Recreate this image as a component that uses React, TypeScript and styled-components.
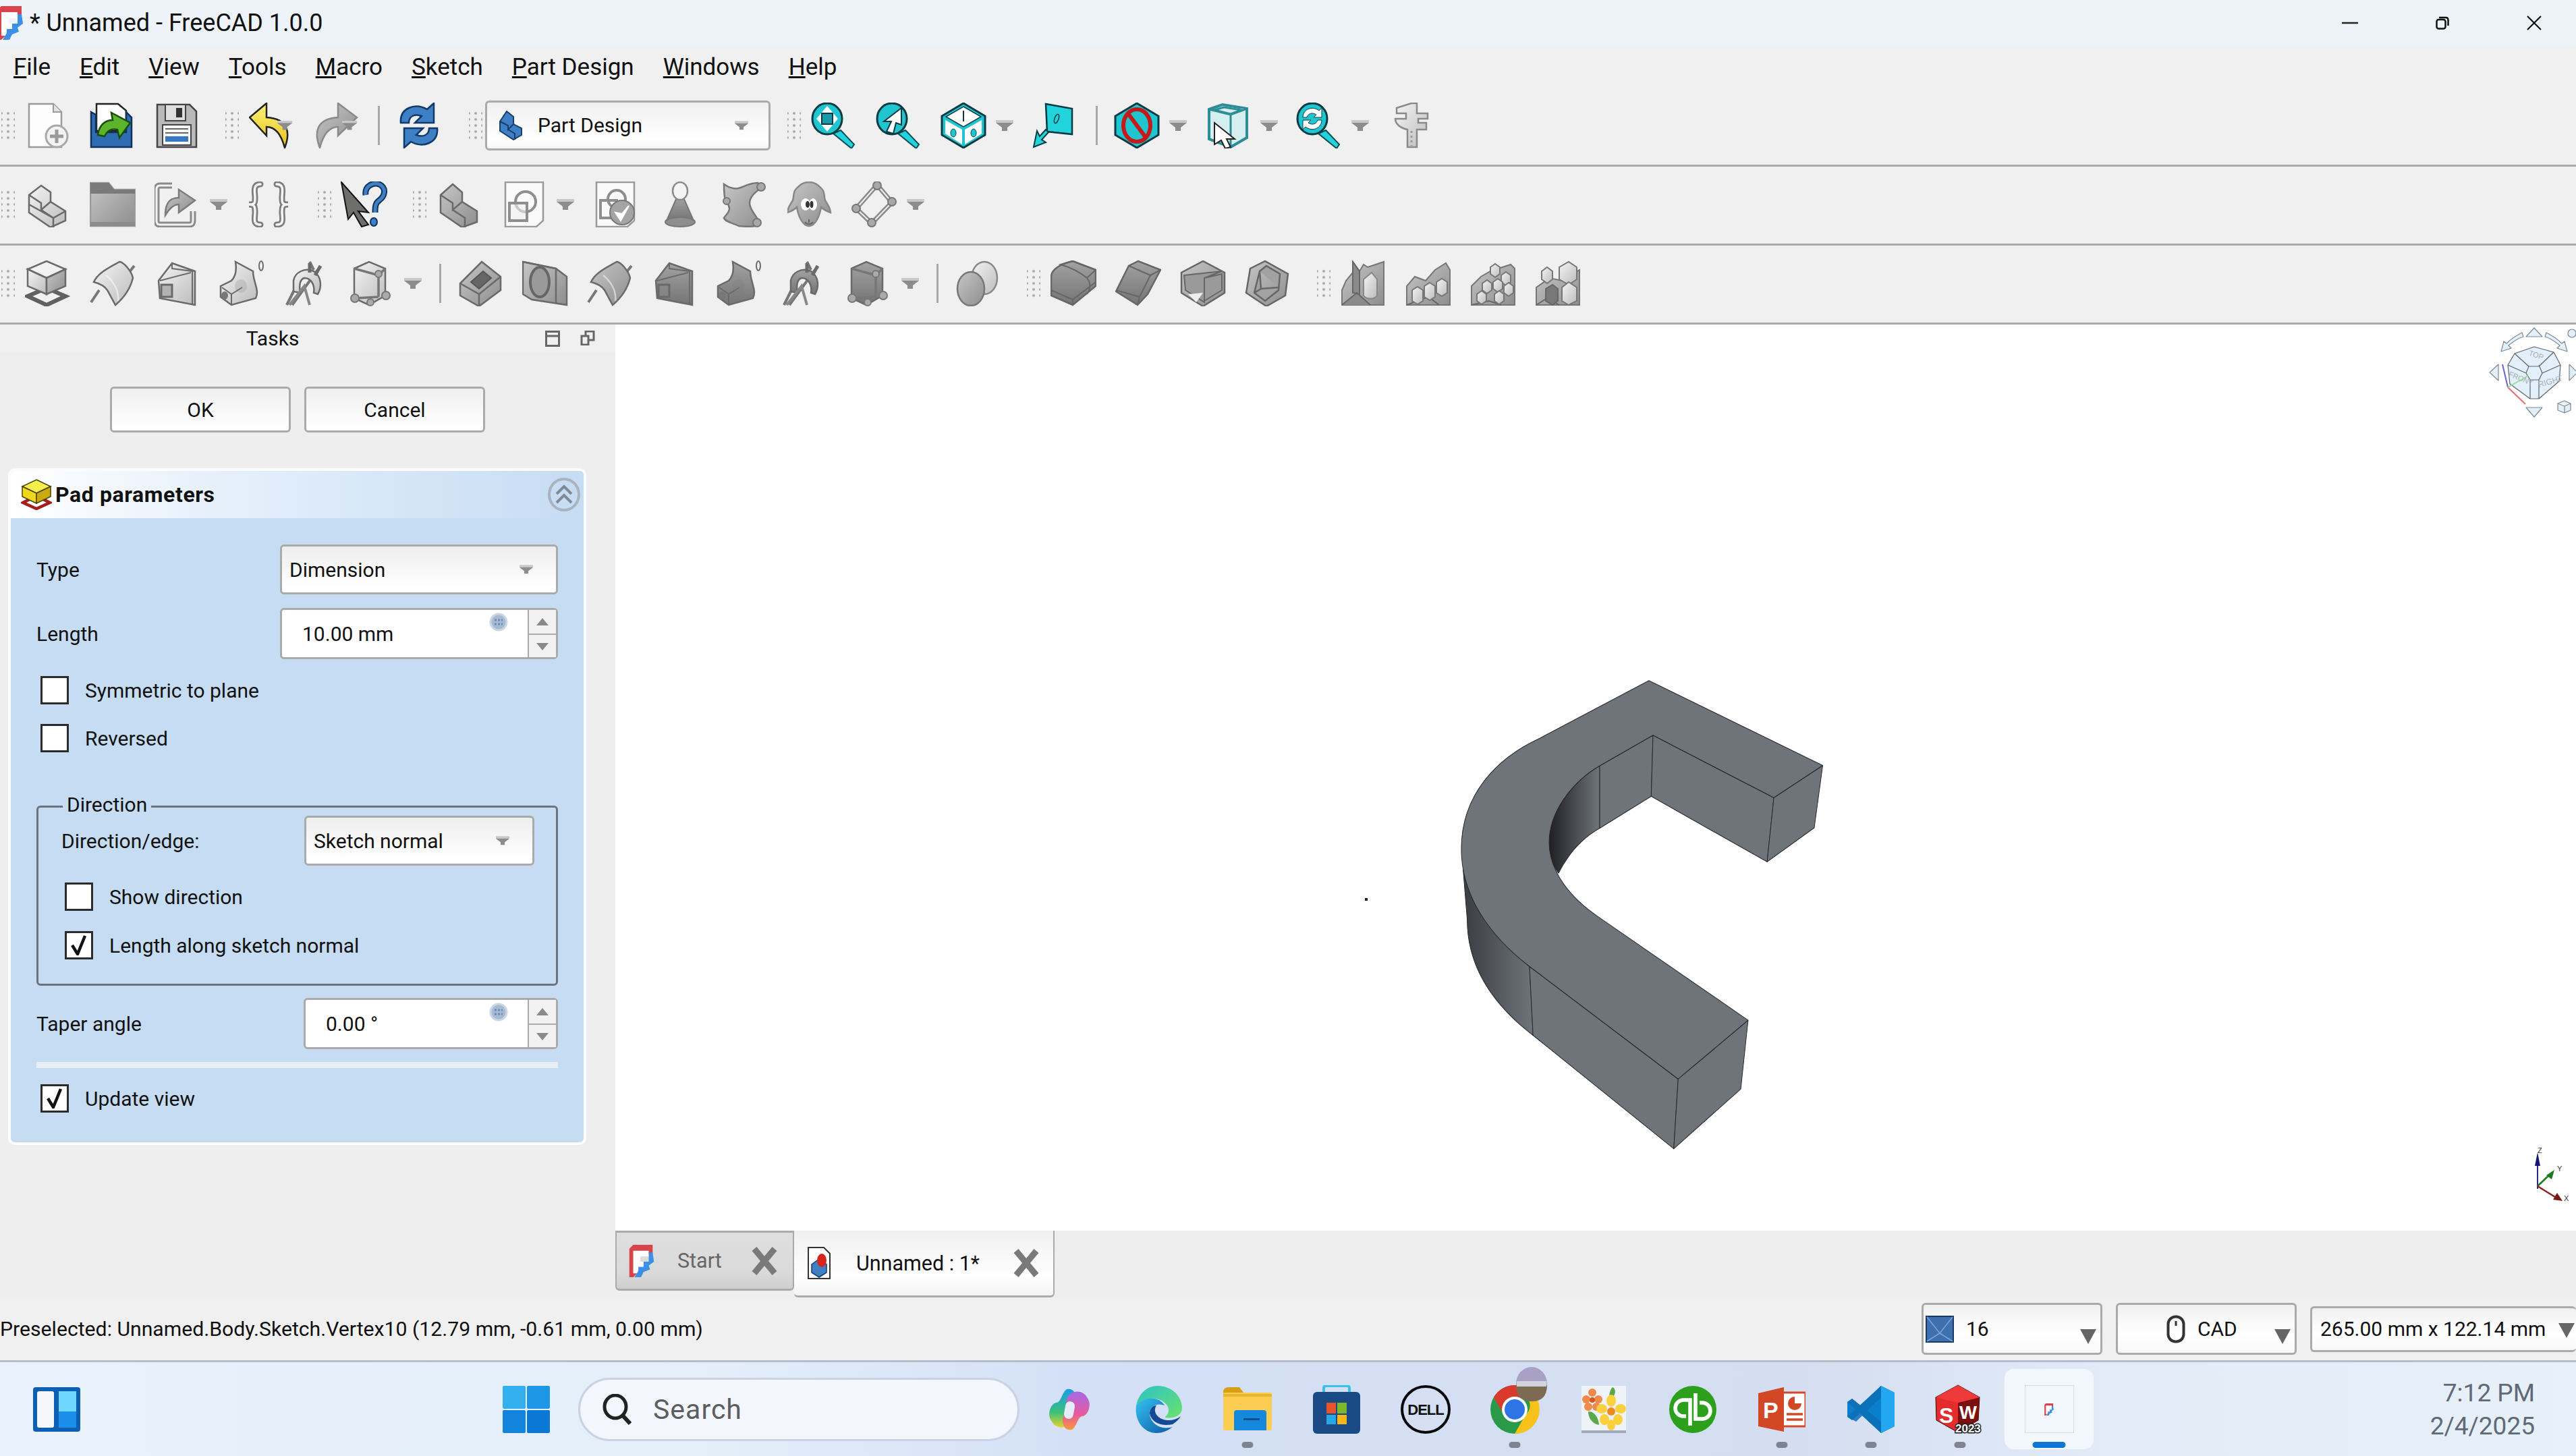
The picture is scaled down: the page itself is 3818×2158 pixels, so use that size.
import React from 'react';
import styled, { createGlobalStyle } from 'styled-components';

const GlobalStyle = createGlobalStyle`
  html, body {
    margin: 0;
    padding: 0;
    width: 3818px;
    height: 2158px;
    overflow: hidden;
    background: #eeeeee;
    font-family: Roboto, "Noto Sans", sans-serif;
    color: #111;
  }
  * { box-sizing: border-box; }
`;

const Screen = styled.div`
  width: 3818px;
  height: 2158px;
  display: flex;
  flex-direction: column;
  overflow: hidden;
`;

const TitleBar = styled.div`
  height: 68px;
  flex: none;
  display: flex;
  align-items: center;
  background: #eef3f9;
  font-size: 36px;
`;

const TitleText = styled.span`
  margin-left: 10px;
`;

const WindowControls = styled.div`
  margin-left: auto;
  display: flex;
  align-items: center;
  padding-right: 51px;
  gap: 115px;
`;

const MenuBar = styled.div`
  height: 62px;
  flex: none;
  display: flex;
  align-items: center;
  gap: 43px;
  padding-left: 20px;
  font-size: 35px;
  background: #f0f0f0;
`;

const Toolbar = styled.div`
  height: 117px;
  flex: none;
  display: flex;
  align-items: center;
  padding-bottom: 3px;
  background: #f0f0f0;
  border-bottom: 3px solid #aaaaaa;
`;

const Grip = styled.div<{ $ml: number }>`
  width: 22px;
  height: 48px;
  flex: none;
  margin-left: ${(p) => p.$ml}px;
  background-image: radial-gradient(circle, #a8a8a8 1.6px, transparent 2.2px);
  background-size: 10px 9px;
  background-position: center;
  background-repeat: repeat;
  clip-path: inset(0 1px);
`;

const Tool = styled.div`
  width: 96px;
  height: 68px;
  flex: none;
  display: flex;
  align-items: center;
  justify-content: center;
`;

const MenuArrow = styled.div`
  width: 26px;
  margin-right: 13px;
  flex: none;
  display: flex;
  justify-content: center;
`;

const Sep = styled.div`
  width: 3px;
  height: 58px;
  flex: none;
  margin: 0 10px 0 13px;
  background: #a8a8a8;
`;

const WorkbenchCombo = styled.div`
  width: 423px;
  height: 74px;
  flex: none;
  margin-left: 3px;
  padding: 0 30px 0 17px;
  display: flex;
  align-items: center;
  gap: 22px;
  font-size: 30px;
  border: 3px solid #aaaaaa;
  border-radius: 6px;
  background: linear-gradient(#f0f0f0, #ffffff 80%, #f6f6f6);
`;

const ComboDrop = styled.span`
  margin-left: auto;
  display: flex;
`;

const Main = styled.div`
  flex: 1;
  min-height: 0;
  display: flex;
`;

const TaskPanel = styled.div`
  width: 912px;
  flex: none;
  background: #eeeeee;
  display: flex;
  flex-direction: column;
  font-size: 30px;
`;

const DockHeader = styled.div`
  height: 41px;
  flex: none;
  display: grid;
  grid-template-columns: 808px 1fr;
  align-items: center;
  background: #f0f0f0;
`;

const DockTitle = styled.div`
  text-align: center;
`;

const DockIcons = styled.div`
  display: flex;
  gap: 30px;
`;

const ButtonRow = styled.div`
  display: flex;
  gap: 20px;
  margin: 51px 0 0 163px;
`;

const PushButton = styled.div`
  width: 268px;
  height: 68px;
  display: flex;
  align-items: center;
  justify-content: center;
  border: 3px solid #aaaaaa;
  border-radius: 6px;
  background: linear-gradient(#f0f0f0, #ffffff);
`;

const TaskBox = styled.div`
  width: 857px;
  height: 1003px;
  margin: 53px 0 0 12px;
  border: 4px solid #fbfcfd;
  border-radius: 10px;
  background: #c6dcf3;
  display: flex;
  flex-direction: column;
`;

const TaskBoxHeader = styled.div`
  height: 70px;
  flex: none;
  display: flex;
  align-items: center;
  padding: 0 4px 0 15px;
  gap: 5px;
  background: linear-gradient(90deg, #ffffff, #e6f0fb 35%, #c6dcf3);
  border-radius: 6px 6px 0 0;
  font-weight: 700;
  font-size: 32px;
  letter-spacing: 0.6px;
`;

const CollapseButton = styled.div`
  margin-left: auto;
  display: flex;
`;

const TaskBody = styled.div`
  flex: 1;
  padding: 39px 38px 0;
  display: flex;
  flex-direction: column;
`;

const FormRow = styled.div<{ $top?: number; $h?: number }>`
  display: flex;
  align-items: center;
  justify-content: space-between;
  flex: none;
  height: ${(p) => p.$h ?? 76}px;
  margin-top: ${(p) => p.$top ?? 0}px;
`;

const Combo = styled.div<{ $w: number; $h?: number }>`
  width: ${(p) => p.$w}px;
  height: ${(p) => p.$h ?? 74}px;
  padding: 0 34px 0 11px;
  display: flex;
  align-items: center;
  justify-content: space-between;
  border: 3px solid #aaaaaa;
  border-radius: 6px;
  background: linear-gradient(#eeeeee, #ffffff 90%);
`;

const Spin = styled.div<{ $w: number }>`
  width: ${(p) => p.$w}px;
  height: 76px;
  display: flex;
  border: 3px solid #aaaaaa;
  border-radius: 6px;
  background: #ffffff;
`;

const SpinValue = styled.div<{ $pad: number }>`
  flex: 1;
  padding-left: ${(p) => p.$pad}px;
  position: relative;
  display: flex;
  align-items: center;
`;

const ExprBadge = styled.div`
  position: absolute;
  right: 29px;
  top: 3px;
  display: flex;
`;

const SpinButtons = styled.div`
  width: 42px;
  flex: none;
  display: grid;
  grid-template-rows: 1fr 1fr;
  border-left: 2px solid #aaaaaa;
  background: #f2f2f2;
`;

const SpinButton = styled.div<{ $down?: boolean }>`
  display: flex;
  align-items: center;
  justify-content: center;
  border-top: ${(p) => (p.$down ? '2px solid #aaaaaa' : 'none')};
`;

const CheckRow = styled.label<{ $top: number; $left?: number }>`
  display: flex;
  align-items: center;
  gap: 24px;
  height: 42px;
  flex: none;
  margin-top: ${(p) => p.$top}px;
  margin-left: ${(p) => p.$left ?? 6}px;
`;

const CheckBox = styled.span`
  width: 42px;
  height: 42px;
  flex: none;
  display: flex;
  align-items: center;
  justify-content: center;
  border: 3px solid #2b2b2b;
  background: #ffffff;
`;

const GroupBox = styled.div`
  position: relative;
  flex: none;
  height: 267px;
  margin-top: 79px;
  padding: 12px 32px 0 0;
  border: 3px solid #6b747e;
  border-radius: 6px;
  display: flex;
  flex-direction: column;
`;

const GroupLegend = styled.span`
  position: absolute;
  top: -24px;
  left: 36px;
  padding: 0 6px;
  background: #c6dcf3;
  line-height: 40px;
`;

const GroupLabel = styled.span`
  margin-left: 34px;
`;

const Rule = styled.div`
  height: 9px;
  flex: none;
  margin-top: 19px;
  background: #e9eef2;
`;

const RightColumn = styled.div`
  flex: 1;
  min-width: 0;
  display: flex;
  flex-direction: column;
`;

const Viewport = styled.div`
  flex: 1;
  min-height: 0;
  position: relative;
  overflow: hidden;
  background: #ffffff;
`;

const ModelLayer = styled.svg`
  position: absolute;
  left: 1188px;
  top: 469px;
  width: 680px;
  height: 780px;
`;

const VertexDot = styled.div`
  position: absolute;
  left: 1111px;
  top: 850px;
  width: 4px;
  height: 4px;
  background: #222;
`;

const NavCube = styled.svg`
  position: absolute;
  left: 2768px;
  top: -1px;
  width: 140px;
  height: 140px;
  overflow: visible;
`;

const Triad = styled.svg`
  position: absolute;
  left: 2828px;
  top: 1219px;
  width: 78px;
  height: 90px;
`;

const TabBar = styled.div`
  height: 99px;
  flex: none;
  display: flex;
  align-items: flex-start;
  background: #eeeeee;
`;

const Tab = styled.div<{ $active?: boolean }>`
  width: ${(p) => (p.$active ? 386 : 265)}px;
  height: ${(p) => (p.$active ? 99 : 89)}px;
  flex: none;
  display: flex;
  align-items: center;
  padding: ${(p) => (p.$active ? '0 20px 0 20px' : '0 22px 0 18px')};
  gap: ${(p) => (p.$active ? 38 : 34)}px;
  font-size: 30.5px;
  color: ${(p) => (p.$active ? '#111' : '#666')};
  border-style: solid;
  border-width: ${(p) => (p.$active ? '0 2px 3px 0' : '3px 2px 3px 2px')};
  border-color: #aaaaaa;
  border-radius: 0 0 6px 6px;
  background: ${(p) =>
    p.$active ? 'linear-gradient(#f0f0f0, #ffffff 70%, #f4f4f4)' : 'linear-gradient(#dedede, #dadada 70%, #cfcfcf)'};
`;

const TabClose = styled.span`
  margin-left: auto;
  display: flex;
`;

const StatusBar = styled.div`
  height: 93px;
  flex: none;
  display: flex;
  align-items: center;
  background: #f0f0f0;
  font-size: 30px;
`;

const StatusText = styled.span`
  font-size: 30.2px;
  white-space: nowrap;
`;

const StatusCombos = styled.div`
  margin-left: auto;
  display: flex;
  align-items: center;
  gap: 20px;
`;

const StatusCombo = styled.div<{ $w: number; $h: number; $pad: number }>`
  width: ${(p) => p.$w}px;
  height: ${(p) => p.$h}px;
  padding-left: ${(p) => p.$pad}px;
  display: flex;
  align-items: center;
  gap: 18px;
  position: relative;
  border: 3px solid #aaaaaa;
  border-right-width: ${(p) => (p.$w > 300 ? 0 : 3)}px;
  border-radius: 6px;
  background: linear-gradient(#f0f0f0, #ffffff 60%, #f8f8f8);
  white-space: nowrap;
`;

const StatusArrow = styled.span<{ $top?: number; $right?: number }>`
  position: absolute;
  right: ${(p) => p.$right ?? 6}px;
  top: ${(p) => p.$top ?? 36}px;
  width: 0;
  height: 0;
  border-left: 12px solid transparent;
  border-right: 12px solid transparent;
  border-top: 22px solid #666;
`;

const Taskbar = styled.div`
  height: 142px;
  flex: none;
  display: flex;
  align-items: center;
  border-top: 3px solid #b5bccb;
  background: linear-gradient(90deg, #eaf2fb 0%, #e3eef9 28%, #d4e0f6 42%, #d4def0 70%, #e2ebf7 82%, #e8f0f9 100%);
`;

const WidgetButton = styled.div`
  margin-left: 49px;
  display: flex;
`;

const StartButton = styled.div`
  margin-left: 626px;
  display: flex;
`;

const SearchBox = styled.div`
  width: 654px;
  height: 94px;
  margin-left: 42px;
  padding-left: 32px;
  display: flex;
  align-items: center;
  gap: 32px;
  border: 3px solid #c9d3e4;
  border-radius: 47px;
  background: #f3f7fd;
  font-size: 41px;
  color: #5d5d5d;
  letter-spacing: 1px;
`;

const TaskSlots = styled.div`
  margin-left: 8px;
  display: flex;
`;

const TaskSlot = styled.div<{ $current?: boolean }>`
  position: relative;
  width: 132px;
  height: 119px;
  display: flex;
  align-items: center;
  justify-content: center;
  border-radius: 14px;
  background: ${(p) => (p.$current ? '#f2f6fd' : 'transparent')};
  box-shadow: ${(p) => (p.$current ? '0 0 0 1px #e4eaf4' : 'none')};
`;

const CurrentFrame = styled.div`
  width: 73px;
  height: 71px;
  display: flex;
  align-items: center;
  justify-content: center;
  border: 1px solid #d8dee8;
`;

const RunDot = styled.span<{ $current?: boolean }>`
  position: absolute;
  bottom: 2px;
  left: 50%;
  transform: translateX(-50%);
  width: ${(p) => (p.$current ? 49 : 17)}px;
  height: 9px;
  border-radius: 5px;
  background: ${(p) => (p.$current ? '#0c77d6' : '#7e8491')};
`;

const Clock = styled.div`
  margin-left: auto;
  padding-right: 61px;
  text-align: right;
  font-size: 37px;
  line-height: 49px;
  color: #5e6a78;
`;

const C = { s: '#6a6a6a', w: 2.5 };

const GrayDefs = () => (
  <svg width="0" height="0" aria-hidden="true" style={{ position: 'absolute' }}>
    <defs>
      <linearGradient id="gl" x1="0" y1="0" x2="1" y2="1">
        <stop offset="0" stopColor="#f4f4f4" />
        <stop offset="1" stopColor="#bcbcbc" />
      </linearGradient>
      <linearGradient id="gm" x1="0" y1="0" x2="1" y2="1">
        <stop offset="0" stopColor="#c6c6c6" />
        <stop offset="1" stopColor="#8e8e8e" />
      </linearGradient>
      <linearGradient id="gd" x1="0" y1="0" x2="0" y2="1">
        <stop offset="0" stopColor="#a2a2a2" />
        <stop offset="1" stopColor="#747474" />
      </linearGradient>
      <linearGradient id="yel" x1="0" y1="0" x2="0" y2="1">
        <stop offset="0" stopColor="#fff27a" />
        <stop offset="1" stopColor="#e6c21c" />
      </linearGradient>
      <linearGradient id="edgeA" x1="0" y1="0" x2="1" y2="1">
        <stop offset="0" stopColor="#35c1f1" />
        <stop offset="1" stopColor="#0c59a4" />
      </linearGradient>
      <linearGradient id="edgeB" x1="0" y1="0" x2="1" y2="1">
        <stop offset="0" stopColor="#2cc3c9" />
        <stop offset="1" stopColor="#6be16a" />
      </linearGradient>
      <linearGradient id="curveIn" x1="0" y1="0" x2="1" y2="0">
        <stop offset="0" stopColor="#1f2023" />
        <stop offset="1" stopColor="#6f747b" />
      </linearGradient>
      <linearGradient id="curveOut" x1="0" y1="0" x2="1" y2="0">
        <stop offset="0" stopColor="#3a3d42" />
        <stop offset="1" stopColor="#6f747b" />
      </linearGradient>
      <linearGradient id="copA" x1="0" y1="0" x2="0" y2="1">
        <stop offset="0" stopColor="#1b9de8" />
        <stop offset="0.6" stopColor="#38c07c" />
        <stop offset="1" stopColor="#e8d22e" />
      </linearGradient>
      <linearGradient id="copB" x1="0" y1="0" x2="0" y2="1">
        <stop offset="0" stopColor="#a56ae8" />
        <stop offset="0.6" stopColor="#e85a9c" />
        <stop offset="1" stopColor="#f59a3c" />
      </linearGradient>
    </defs>
  </svg>
);

const Ic: React.FC<{ w?: number; h?: number; children: React.ReactNode }> = ({ w = 68, h = 68, children }) => (
  <svg width={w} height={h} viewBox={`0 0 ${w} ${h}`} style={{ display: 'block' }}>
    {children}
  </svg>
);

const Funnel = ({ x = 0, y = 0 }: { x?: number; y?: number }) => (
  <g transform={`translate(${x} ${y})`}>
    <path d="M0 0H26V4L17 11V16H9V11L0 4Z" fill="#8c8c8c" />
    <path d="M0 0H26V4H0Z" fill="#c8c8c8" />
  </g>
);

const Drop = () => (
  <svg width="26" height="16" viewBox="0 0 26 16" style={{ display: 'block' }}>
    <Funnel />
  </svg>
);

const SmallDrop = () => (
  <svg width="20" height="14" viewBox="0 0 26 16" style={{ display: 'block', flex: 'none' }}>
    <Funnel />
  </svg>
);

const FreeCadLogo = ({ w = 38, h = 50 }: { w?: number; h?: number }) => (
  <svg width={w} height={h} viewBox="0 0 38 50" style={{ display: 'block', flex: 'none' }}>
    <path d="M0 6 6 0H36V14H14V42L6 50H0Z" fill="#d9434a" />
    <path d="M6 9H30V18H17V26H22V34H14V44H6Z" fill="#ffffff" />
    <path d="M30 12H36L38 26 30 32 32 38 22 42 18 50H8L14 40V34H22V26H30Z" fill="#3c8fe6" />
  </svg>
);

const Mag: React.FC<{ children: React.ReactNode }> = ({ children }) => (
  <Ic>
    <path d="M33 46 44 41 64 62 60 68Z" fill="#22d3dc" stroke="#0a4b55" strokeWidth="2" />
    <ellipse cx="24" cy="24" rx="22" ry="23" fill="#1fc6cf" stroke="#0a3b44" strokeWidth="3" />
    {children}
  </Ic>
);

const Hex = ({ children }: { children?: React.ReactNode }) => (
  <Ic>
    <path d="M34 1 66 20V48L34 67 2 48V20Z" fill="#1fc6cf" stroke="#0a3b44" strokeWidth="3" />
    {children}
  </Ic>
);

const icons: Record<string, React.ReactNode> = {
  newDoc: (
    <Ic>
      <path d="M6 2H42L54 14V66H6Z" fill="#fdfdfd" stroke="#9a9a9a" strokeWidth="2.5" />
      <path d="M42 2V14H54" fill="#e2e2e2" stroke="#9a9a9a" strokeWidth="2" />
      <circle cx="47" cy="50" r="16" fill="#f2f2f2" stroke="#a8a8a8" strokeWidth="3" />
      <path d="M47 40V60M37 50H57" stroke="#9a9a9a" strokeWidth="5" />
    </Ic>
  ),
  open: (
    <Ic>
      <path d="M10 2H42L54 12V42H10Z" fill="#fff" stroke="#222" strokeWidth="2.5" />
      <path d="M2 14 9 18V44H54V14L62 22V66H2Z" fill="#2f6db3" stroke="#12325c" strokeWidth="2.5" />
      <path d="M12 48C14 32 24 26 34 26L32 15 60 30 44 52 41 40C31 38 26 42 22 50Z" fill="#5ab52a" stroke="#1d4d0e" strokeWidth="2.5" />
    </Ic>
  ),
  save: (
    <Ic>
      <path d="M4 3H52L62 13V66H4Z" fill="#b9b9b9" stroke="#444" strokeWidth="2.5" />
      <rect x="16" y="3" width="30" height="24" fill="#dedede" stroke="#444" strokeWidth="2" />
      <rect x="32" y="8" width="9" height="14" fill="#333" />
      <rect x="12" y="33" width="42" height="30" fill="#f6f6f6" stroke="#444" strokeWidth="2" />
      <path d="M16 39H50M16 45H50" stroke="#666" strokeWidth="2" />
      <rect x="16" y="50" width="34" height="8" fill="#3a77c2" />
    </Ic>
  ),
  undo: (
    <Ic>
      <path d="M26 1 1 22 26 49V36C40 36 48 48 53 67 62 44 58 24 26 22Z" fill="url(#yel)" stroke="#222" strokeWidth="2.5" />
      <g transform="translate(42 27) scale(.85)"><Funnel /></g>
    </Ic>
  ),
  redo: (
    <Ic>
      <path d="M36 1 64 22 36 49V36C22 36 14 48 9 67 0 44 4 24 36 22Z" fill="url(#gm)" stroke="#8a8a8a" strokeWidth="2.5" />
      <g transform="translate(42 27) scale(.85)"><Funnel /></g>
    </Ic>
  ),
  refresh: (
    <Ic w={60}>
      <path d="M3 30C1 8 24 0 42 10L52 1V30H24L34 20C24 16 15 20 15 30Z" fill="#3f7fc4" stroke="#103a6b" strokeWidth="2.5" />
      <path d="M57 38C59 60 36 68 18 58L8 67V38H36L26 48C36 52 45 48 45 38Z" fill="#3f7fc4" stroke="#103a6b" strokeWidth="2.5" />
    </Ic>
  ),
  zoomAll: (
    <Mag>
      <path d="M24 5 40 24 24 43 8 24Z" fill="#fff" />
      <rect x="16" y="16" width="16" height="16" fill="#1a9aa8" stroke="#0a3b44" strokeWidth="2" />
    </Mag>
  ),
  zoomSel: (
    <Mag>
      <path d="M38 8 12 28H23L16 43 26 46 30 30 38 33Z" fill="#fff" stroke="#0a3b44" strokeWidth="2" />
    </Mag>
  ),
  views: (
    <Hex>
      <path d="M34 6 60 21 34 36 8 21Z" fill="#fff" stroke="#0a3b44" strokeWidth="1.5" />
      <path d="M7 26 32 40V62L7 46Z" fill="#fff" />
      <path d="M61 26 36 40V62L61 46Z" fill="#fff" />
      <path d="M34 12V28" stroke="#0a3b44" strokeWidth="2" />
      <ellipse cx="19" cy="45" rx="4" ry="6" fill="#1fc6cf" stroke="#0a3b44" />
      <ellipse cx="49" cy="45" rx="4" ry="6" fill="#1fc6cf" stroke="#0a3b44" />
    </Hex>
  ),
  bbox: (
    <Ic>
      <path d="M21 2 60 9V47L23 43Z" fill="#22d3dc" stroke="#083a44" strokeWidth="2.5" />
      <ellipse cx="37" cy="24" rx="3" ry="7" fill="#22d3dc" stroke="#083a44" strokeWidth="1.5" transform="rotate(20 37 24)" />
      <path d="M3 66 8 42 12 50 21 40 25 44 15 55 21 59Z" fill="#22d3dc" stroke="#083a44" strokeWidth="2" />
    </Ic>
  ),
  noDraw: (
    <Hex>
      <ellipse cx="34" cy="34" rx="20" ry="24" fill="none" stroke="#c41a1a" strokeWidth="6" />
      <path d="M20 15 48 53" stroke="#c41a1a" strokeWidth="6" />
    </Hex>
  ),
  cubeCursor: (
    <Ic>
      <path d="M6 10 26 3 62 9V52L38 66 6 54Z" fill="#bfeef0" fillOpacity=".55" stroke="#2d8d96" strokeWidth="4" />
      <path d="M14 11 28 7 54 11 38 17ZM6 10 38 18 62 9M38 18V66" fill="#f2fbfb" stroke="#2d8d96" strokeWidth="3" />
      <path d="M14 30 44 54H32L38 66 30 68 24 56 14 62Z" fill="#fff" stroke="#222" strokeWidth="2" />
    </Ic>
  ),
  zoomRefresh: (
    <Mag>
      <path d="M10 22C10 10 24 4 34 12L38 8V22H26L30 18C24 14 18 16 16 22Z" fill="#fff" stroke="#0a3b44" />
      <path d="M38 26C38 38 24 44 14 36L10 40V26H22L18 30C24 34 30 32 32 26Z" fill="#fff" stroke="#0a3b44" />
    </Mag>
  ),
  measure: (
    <Ic>
      <path d="M14 8 36 1H44V16H60V24H46V30H58V40H44V66H30V40C20 38 12 32 12 24H28V16H14Z" fill="url(#gl)" stroke="#8a8a8a" strokeWidth="2.5" />
      <path d="M36 42V64" stroke="#999" strokeWidth="3" strokeDasharray="3 4" />
    </Ic>
  ),
  lBlockLight: (
    <Ic>
      <path d="M6 20 24 6 38 16V30L60 44V58L38 68 6 46Z" fill="url(#gl)" stroke={C.s} strokeWidth={C.w} />
      <path d="M6 20 24 32V42L38 30M24 42 42 54V68M6 34 42 54 60 44" fill="none" stroke={C.s} strokeWidth={C.w} />
    </Ic>
  ),
  lBlockDark: (
    <Ic>
      <path d="M6 20 24 4 38 16V30L60 44V60L38 68 6 46Z" fill="url(#gm)" stroke={C.s} strokeWidth={C.w} />
      <path d="M6 20 24 32V42L38 30M24 42 42 54V68" fill="none" stroke={C.s} strokeWidth={C.w} />
    </Ic>
  ),
  folder: (
    <Ic>
      <path d="M1 2H28L36 12H67V66H1Z" fill="url(#gm)" stroke="#9a9a9a" strokeWidth="2.5" />
      <path d="M1 2H28L36 12H67V18H1Z" fill="#7a7a7a" />
      <rect x="1" y="60" width="66" height="6" fill="#8c8c8c" />
    </Ic>
  ),
  exportDoc: (
    <Ic>
      <path d="M26 6H8Q3 6 3 12V58Q3 64 8 64H52Q57 64 57 58V44" fill="none" stroke="#8a8a8a" strokeWidth="9" />
      <path d="M26 6H8Q3 6 3 12V58Q3 64 8 64H52Q57 64 57 58V44" fill="none" stroke="#f2f2f2" strokeWidth="3" />
      <path d="M16 50C16 30 24 24 36 24V12L60 28 36 46V34C28 34 22 40 16 50Z" fill="url(#gm)" stroke="#7c7c7c" strokeWidth="2.5" />
    </Ic>
  ),
  braces: (
    <Ic>
      <g fill="none" strokeLinecap="round">
        <path d="M22 4C10 4 14 16 14 24S14 34 5 34C14 34 14 38 14 46S10 64 22 64" stroke="#7d7d7d" strokeWidth="9" />
        <path d="M46 4C58 4 54 16 54 24S54 34 63 34C54 34 54 38 54 46S58 64 46 64" stroke="#7d7d7d" strokeWidth="9" />
        <path d="M22 4C10 4 14 16 14 24S14 34 5 34C14 34 14 38 14 46S10 64 22 64" stroke="#f5f5f5" strokeWidth="3.5" />
        <path d="M46 4C58 4 54 16 54 24S54 34 63 34C54 34 54 38 54 46S58 64 46 64" stroke="#f5f5f5" strokeWidth="3.5" />
      </g>
    </Ic>
  ),
  whatsThis: (
    <Ic w={72}>
      <path d="M2 1 42 46 27 44 42 64 32 67 20 46 12 56Z" fill="#6e6f6d" stroke="#111" strokeWidth="2" />
      <path d="M38 20C36 6 50 1 58 4 70 10 66 22 58 28 52 32 52 38 52 46" fill="none" stroke="#10335f" strokeWidth="9" />
      <path d="M38 20C36 6 50 1 58 4 70 10 66 22 58 28 52 32 52 38 52 46" fill="none" stroke="#3f7fc4" strokeWidth="5" />
      <ellipse cx="50" cy="60" rx="5" ry="6" fill="#3f7fc4" stroke="#10335f" strokeWidth="2" />
    </Ic>
  ),
  sketch: (
    <Ic>
      <path d="M6 1H62V58L52 67H6Z" fill="#fafafa" stroke="#9a9a9a" strokeWidth="2.5" />
      <circle cx="36" cy="30" r="15" fill="none" stroke="#8e8e8e" strokeWidth="4" />
      <rect x="12" y="32" width="26" height="26" fill="#eeeeee" fillOpacity=".6" stroke="#8e8e8e" strokeWidth="4" />
    </Ic>
  ),
  sketchOk: (
    <Ic>
      <path d="M6 1H62V58L52 67H6Z" fill="#fafafa" stroke="#9a9a9a" strokeWidth="2.5" />
      <circle cx="36" cy="26" r="13" fill="none" stroke="#8e8e8e" strokeWidth="4" />
      <rect x="12" y="28" width="24" height="26" fill="none" stroke="#8e8e8e" strokeWidth="4" />
      <circle cx="44" cy="46" r="18" fill="#a4a4a4" stroke="#777" strokeWidth="2" />
      <path d="M34 46 42 58 54 36 44 48Z" fill="#fff" stroke="#fff" strokeWidth="2" />
    </Ic>
  ),
  pawn: (
    <Ic w={52}>
      <path d="M21 24 6 58H46L31 24Z" fill="url(#gd)" stroke="#777" strokeWidth="2" />
      <ellipse cx="26" cy="60" rx="22" ry="7" fill="#8e8e8e" stroke="#777" strokeWidth="2" />
      <ellipse cx="26" cy="14" rx="11" ry="13" fill="#f4f4f4" stroke="#8a8a8a" strokeWidth="2.5" />
    </Ic>
  ),
  surface: (
    <Ic w={66}>
      <path d="M2 4C10 10 20 12 27 9 34 6 42 2 52 2L60 8C50 14 40 22 40 32 40 42 50 50 54 60L48 66C40 68 30 66 24 66 16 62 4 60 2 54 6 48 10 46 10 40 10 34 6 32 4 28 2 20 2 12 2 4Z" fill="url(#gm)" stroke="#777" strokeWidth="2.5" />
      <circle cx="57" cy="8" r="6" fill="#a8a8a8" stroke="#777" strokeWidth="2" />
      <circle cx="6" cy="29" r="5" fill="#a8a8a8" stroke="#777" strokeWidth="2" />
      <circle cx="51" cy="61" r="6" fill="#a8a8a8" stroke="#777" strokeWidth="2" />
    </Ic>
  ),
  sheep: (
    <Ic w={66}>
      <path d="M32 1C42 1 46 6 50 10 56 14 54 22 56 28 60 34 64 40 64 46 58 44 52 40 50 38 48 50 42 66 32 66 22 66 16 50 14 38 12 40 6 44 0 46 0 40 4 34 8 28 10 22 8 14 14 10 18 6 22 1 32 1Z" fill="url(#gm)" stroke="#888" strokeWidth="2.5" />
      <ellipse cx="27" cy="34" rx="7" ry="9" fill="#fff" />
      <ellipse cx="38" cy="34" rx="6" ry="9" fill="#fff" />
      <ellipse cx="30" cy="34" rx="3" ry="5" fill="#333" />
      <ellipse cx="36" cy="34" rx="2.5" ry="5" fill="#333" />
      <path d="M32 56V61M26 60C28 64 36 64 38 60" fill="none" stroke="#666" strokeWidth="2" />
    </Ic>
  ),
  poly: (
    <Ic>
      <path d="M38 5 60 31 30 62 7 40Z" fill="none" stroke="#8a8a8a" strokeWidth="7" />
      <path d="M38 5 60 31 30 62 7 40Z" fill="none" stroke="#eeeeee" strokeWidth="2" />
      <circle cx="38" cy="6" r="6" fill="#a8a8a8" stroke="#777" strokeWidth="2" />
      <circle cx="60" cy="30" r="6" fill="#a8a8a8" stroke="#777" strokeWidth="2" />
      <circle cx="30" cy="61" r="6" fill="#a8a8a8" stroke="#777" strokeWidth="2" />
      <circle cx="7" cy="40" r="6" fill="#a8a8a8" stroke="#777" strokeWidth="2" />
    </Ic>
  ),
  pad: (
    <Ic>
      <path d="M4 53 32 41 60 53 32 66Z" fill="none" stroke="#606060" strokeWidth="6" />
      <path d="M32 1 60 13 32 26 4 13Z" fill="#f2f2f2" stroke={C.s} strokeWidth={C.w} />
      <path d="M4 13 32 26V50L4 38Z" fill="url(#gl)" stroke={C.s} strokeWidth={C.w} />
      <path d="M32 26 60 13V38L32 50Z" fill="url(#gm)" stroke={C.s} strokeWidth={C.w} />
    </Ic>
  ),
  pocket: (
    <Ic>
      <path d="M4 34 36 2 64 24V44L32 68 4 52Z" fill="url(#gm)" stroke={C.s} strokeWidth={C.w} />
      <path d="M4 34 32 50V68M32 50 64 24" fill="none" stroke={C.s} strokeWidth={C.w} />
      <path d="M20 32 38 16 50 26 32 42Z" fill="#666" stroke="#555" strokeWidth="2" />
    </Ic>
  ),
  hole: (
    <Ic>
      <path d="M1 2 50 12 66 24V66L14 58 1 50Z" fill="url(#gm)" stroke={C.s} strokeWidth={C.w} />
      <path d="M1 2 50 12V64" fill="none" stroke={C.s} strokeWidth={C.w} />
      <ellipse cx="26" cy="32" rx="14" ry="22" fill="#9a9a9a" stroke="#666" strokeWidth="4" />
    </Ic>
  ),
  sphere: (
    <Ic>
      <ellipse cx="44" cy="26" rx="19" ry="24" fill="url(#gl)" stroke="#888" strokeWidth="2.5" />
      <ellipse cx="24" cy="42" rx="20" ry="25" fill="url(#gm)" stroke="#777" strokeWidth="2.5" />
    </Ic>
  ),
  fillet: (
    <Ic>
      <path d="M1 52V24C1 14 14 5 33 1L67 14V38L33 66Z" fill="url(#gd)" stroke="#666" strokeWidth="2.5" />
      <path d="M15 6 33 1 67 14 54 26C42 16 28 10 15 6ZM54 26C60 34 60 42 54 50M1 44 33 58 67 32M33 58V66" fill="none" stroke="#666" strokeWidth="2" />
    </Ic>
  ),
  chamfer: (
    <Ic>
      <path d="M1 46 20 8 34 1 67 14 48 50 33 66Z" fill="url(#gd)" stroke="#666" strokeWidth="2.5" />
      <path d="M20 8 52 22 36 54 1 44M52 22 67 14M36 54 33 66" fill="none" stroke="#666" strokeWidth="2" />
    </Ic>
  ),
  draft: (
    <Ic>
      <path d="M34 1 66 18V48L34 68 2 48V18Z" fill="url(#gm)" stroke="#666" strokeWidth="2.5" />
      <path d="M6 22 62 16 36 26V62L8 44ZM36 26 62 20V44L36 60" fill="#9a9a9a" stroke="#666" strokeWidth="2" />
      <path d="M12 50 34 48 24 62Z" fill="#eeeeee" />
    </Ic>
  ),
  thickness: (
    <Ic>
      <path d="M30 1 64 20 60 52 32 68 2 48 8 12Z" fill="url(#gm)" stroke="#666" strokeWidth="2.5" />
      <path d="M22 16 32 8 52 20 50 44 30 60 14 48ZM22 16 24 42 50 40M14 48 24 42" fill="#a2a2a2" stroke="#666" strokeWidth="2.5" />
    </Ic>
  ),
  mirrored: (
    <Ic>
      <path d="M2 66V44L8 30 18 18V2L28 16 34 6 40 10 64 2V66Z" fill="url(#gm)" stroke="#777" strokeWidth="2" />
      <path d="M18 2 28 16V50L18 48ZM2 66 24 48 44 66" fill="#8a8a8a" stroke="#666" strokeWidth="2" />
      <path d="M34 28 46 18 54 28V52C50 58 38 58 34 52Z" fill="url(#gl)" stroke="#888" strokeWidth="2" />
    </Ic>
  ),
  linear: (
    <Ic>
      <path d="M2 66V38L14 24 30 30 44 14 60 4 66 14V66Z" fill="url(#gm)" stroke="#777" strokeWidth="2" />
      <path d="M2 66 34 54 50 66" fill="none" stroke="#666" strokeWidth="2" />
      {[10, 28, 46].map((x) => (
        <path key={x} d={`M${x} ${32 + (46 - x) / 3}l8-5 8 5v16l-8 5-8-5Z`} fill="url(#gl)" stroke="#777" strokeWidth="2" />
      ))}
    </Ic>
  ),
  polar: (
    <Ic>
      <path d="M2 66V38L16 24 30 16 60 6 66 12V66Z" fill="url(#gm)" stroke="#777" strokeWidth="2" />
      <path d="M2 66 28 60 46 66" fill="none" stroke="#666" strokeWidth="2" />
      {[[30, 6], [46, 18], [50, 34], [34, 28], [18, 30], [36, 46], [10, 46]].map(([x, y]) => (
        <path key={`${x}-${y}`} d={`M${x} ${y + 4}l7-5 7 5v10l-7 5-7-5Z`} fill="url(#gl)" stroke="#777" strokeWidth="2" />
      ))}
    </Ic>
  ),
  multi: (
    <Ic>
      <path d="M2 66V40L22 26 40 30 66 14V66Z" fill="url(#gm)" stroke="#777" strokeWidth="2" />
      <path d="M2 66 18 56 36 66" fill="none" stroke="#666" strokeWidth="2" />
      <path d="M10 16 18 10 26 16V28L18 34 10 28Z" fill="url(#gl)" stroke="#777" strokeWidth="2" />
      <path d="M36 10 50 2 62 10V28L50 36 36 28Z" fill="url(#gl)" stroke="#777" strokeWidth="2" />
      <path d="M16 42 26 36 34 42V60L26 66 16 60Z" fill="#787878" stroke="#666" strokeWidth="2" />
      <path d="M40 40 50 32 62 40V60L50 66 40 60Z" fill="url(#gl)" stroke="#777" strokeWidth="2" />
    </Ic>
  ),
};

const revolve = (f: string) => (
  <Ic>
    <path d="M2 62 14 44M58 18 66 8" stroke="#777" strokeWidth="4" />
    <path d="M6 32C12 18 30 10 44 2 50 2 62 16 64 26 60 42 50 56 38 66L26 44C22 38 14 34 6 32Z" fill={`url(#${f})`} stroke={C.s} strokeWidth={C.w} />
    <path d="M24 22C34 30 44 44 42 60" fill="none" stroke="#fff" strokeOpacity=".5" strokeWidth="2.5" />
  </Ic>
);

const loft = (f: string) => (
  <Ic w={60}>
    <path d="M2 30 22 4 56 16V66L4 56Z" fill={`url(#${f})`} stroke={C.s} strokeWidth={C.w} />
    <path d="M22 4V12L52 16V66M4 30 50 18" fill="none" stroke={C.s} strokeWidth="2" />
    <path d="M6 36H22V54H6Z" fill="#8a8a8a" stroke={C.s} strokeWidth="3" fillOpacity=".5" />
  </Ic>
);

const pipe = (f: string) => (
  <Ic>
    <ellipse cx="62" cy="8" rx="3" ry="7" fill="none" stroke={C.s} strokeWidth="2" />
    <path d="M24 2 50 16C50 32 60 44 54 56L18 66 2 54V38L18 30C24 24 26 14 24 2Z" fill={`url(#${f})`} stroke={C.s} strokeWidth={C.w} />
    <path d="M4 40 18 50V66M18 50 34 40" fill="none" stroke={C.s} strokeWidth="2" />
    <ellipse cx="8" cy="52" rx="5" ry="6" fill="#777" />
    <ellipse cx="32" cy="38" rx="9" ry="10" fill="#777" fillOpacity=".2" />
  </Ic>
);

const helix = (f: string) => (
  <Ic>
    <path d="M4 66 22 30M12 66 50 14M38 2 44 14" stroke="#777" strokeWidth="4" fill="none" />
    <path d="M14 30C16 18 30 10 44 16 56 24 56 40 50 50L44 48C46 36 40 26 30 26 24 28 22 36 24 48L14 46Z" fill={`url(#${f})`} stroke={C.s} strokeWidth={C.w} />
    <path d="M38 4V18M54 8 46 22" stroke={C.s} strokeWidth="5" />
    <path d="M8 66 30 38 38 66" fill="none" stroke="#888" strokeWidth="4" />
  </Ic>
);

const prim = (f: string) => (
  <Ic>
    <path d="M8 12 30 2 54 12V52L30 66 8 56Z" fill={`url(#${f})`} stroke={C.s} strokeWidth={C.w} />
    <path d="M8 12 44 22 54 12M44 22V54M10 56 44 54" fill="none" stroke="#777" strokeWidth="3.5" />
    <circle cx="44" cy="20" r="5" fill="#aaa" stroke="#777" strokeWidth="2" />
    <circle cx="9" cy="56" r="6" fill="#aaa" stroke="#777" strokeWidth="2" />
    <circle cx="32" cy="62" r="5" fill="#aaa" stroke="#777" strokeWidth="2" />
    <circle cx="55" cy="52" r="6" fill="#aaa" stroke="#777" strokeWidth="2" />
  </Ic>
);

const PartDesignIcon = () => (
  <svg width="36" height="44" viewBox="0 0 36 44" style={{ flex: 'none' }}>
    <path d="M2 16 12 1 22 9V20L34 26V36L22 43 2 30Z" fill="#3f7fc4" stroke="#173e6d" strokeWidth="2" />
    <path d="M2 16 14 22V28L22 20M14 28 24 34V43" fill="none" stroke="#173e6d" strokeWidth="2" />
  </svg>
);

const PadIcon = () => (
  <svg width="46" height="46" viewBox="0 0 46 46" style={{ flex: 'none' }}>
    <path d="M3 35 23 25 43 35 23 44Z" fill="#fff" stroke="#a81c1c" strokeWidth="4.5" />
    <path d="M23 1 44 11 23 21 2 11Z" fill="#f6ee4a" stroke="#4a4300" strokeWidth="1.5" />
    <path d="M2 11 23 21V36L2 26Z" fill="#efd81c" stroke="#4a4300" strokeWidth="1.5" />
    <path d="M23 21 44 11V26L23 36Z" fill="#c9ac0c" stroke="#4a4300" strokeWidth="1.5" />
  </svg>
);

const Tick = () => (
  <svg width="26" height="30" viewBox="0 0 26 30">
    <path d="M3 15 11 28 22 1" fill="none" stroke="#111" strokeWidth="4.5" />
  </svg>
);

const ExprIcon = () => (
  <svg width="28" height="30" viewBox="0 0 28 30">
    <circle cx="14" cy="15" r="12" fill="#a6bad4" stroke="#cbd6e4" strokeWidth="3" />
    <path d="M8 12H20M8 18H20" stroke="#6f8bb0" strokeWidth="3" strokeDasharray="3 2" />
  </svg>
);

const SpinUp = () => (
  <svg width="20" height="14" viewBox="0 0 20 14">
    <path d="M10 1 19 12H1Z" fill="#8a8a8a" />
  </svg>
);

const SpinDown = () => (
  <svg width="20" height="14" viewBox="0 0 20 14">
    <path d="M1 2H19L10 13Z" fill="#8a8a8a" />
  </svg>
);

const CloseX = () => (
  <svg width="40" height="42" viewBox="0 0 40 42">
    <path d="M5 3 35 39M35 3 5 39" stroke="#7a7a7a" strokeWidth="9" />
  </svg>
);

const ModelShape = () => (
  <ModelLayer viewBox="0 0 1568 1568" preserveAspectRatio="none">
    <g stroke="#23262a" strokeWidth="2.2" vectorEffect="non-scaling-stroke" strokeLinejoin="round">
      <path d="M625 372C530 420 452 510 452 600 452 640 465 670 484 692 520 630 570 585 625 558Z" fill="url(#curveIn)" />
      <path d="M625 372 807 281 801 463 625 558Z" fill="#6f747b" />
      <path d="M807 281 1220 467 1197 658 801 463Z" fill="#6f747b" />
      <path d="M1220 467 1387 371 1358 557 1197 658Z" fill="#6f747b" />
      <path d="M158 680C180 790 270 890 385 970L397 1175C270 1090 172 980 172 830Z" fill="url(#curveOut)" />
      <path d="M385 970 893 1305 878 1513 397 1175Z" fill="#6f747b" />
      <path d="M893 1305 1132 1130 1107 1335 878 1513Z" fill="#6f747b" />
      <path d="M793 118 1387 371 1220 467 807 281 625 372C530 420 452 510 452 600 452 690 530 770 625 825L1132 1130 893 1305 385 970C250 880 152 760 152 620 152 460 270 350 420 290Z" fill="#6f747b" />
    </g>
  </ModelLayer>
);

const NavigationCube = () => (
  <NavCube viewBox="0 0 140 140">
    <g fill="#e3f0fb" stroke="#7d8890" strokeWidth="1.2" strokeLinejoin="round">
      <path d="M76 6 64 19H88Z" />
      <path d="M64 124H88L76 138Z" />
      <path d="M23 60 10 72 23 84Z" />
      <path d="M128 60 140 72 128 84Z" />
      <path d="M58 13 60 19C50 22 44 27 38 32L42 36 27 41 31 26 35 29C42 22 50 17 58 13Z" />
      <path d="M94 13 92 19C102 22 108 27 114 32L110 36 125 41 121 26 117 29C110 22 102 17 94 13Z" />
      <circle cx="132" cy="14" r="6" />
      <path d="M121 114 130 118V128L121 132 111 128V118ZM111 118 121 122 130 118M121 122V132" />
      <path d="M76 34 105 42 115 61 113 85 83 111H70L40 89 37 61 47 44Z" stroke="#5c656c" />
      <path d="M47 44 68 63H83L105 42M37 61 64 73 70 83V111M115 61 88 73 83 83V111M68 63 64 73M83 61 88 73M70 83H83" fill="none" stroke="#5c656c" />
    </g>
    <g fill="#a7aeb4" fontFamily="Liberation Sans, sans-serif" fontSize="11">
      <text x="68" y="49" transform="rotate(18 76 45)">TOP</text>
      <text x="36" y="84" transform="rotate(22 54 84)">FRONT</text>
      <text x="82" y="90" fontSize="12" transform="rotate(-16 98 88)">RIGHT</text>
    </g>
    <path d="M29 60 37 94" stroke="#6a63e0" strokeWidth="2" />
    <path d="M37 94 63 119" stroke="#ea6a6a" strokeWidth="2" />
    <path d="M37 94 67 77" stroke="#8fe08a" strokeWidth="1.6" />
  </NavCube>
);

const AxisTriad = () => (
  <Triad viewBox="0 0 78 90">
    <path d="M21 62V20" stroke="#2a2a8c" strokeWidth="2" />
    <path d="M21 8 25 28H17Z" fill="#14147a" />
    <path d="M21 58 40 40" stroke="#1c7c1c" strokeWidth="2.5" />
    <path d="M46 34 42 48 34 42Z" fill="#1c7c1c" />
    <path d="M21 58 50 76" stroke="#8c2020" strokeWidth="2.5" />
    <path d="M58 80 44 78 50 68Z" fill="#7c1818" />
    <g fontFamily="Liberation Sans, sans-serif" fontSize="11" fill="#333">
      <text x="21" y="9">Z</text>
      <text x="50" y="36">Y</text>
      <text x="60" y="80">X</text>
    </g>
  </Triad>
);

const task: Record<string, React.ReactNode> = {
  widgets: (
    <svg width="70" height="66" viewBox="0 0 70 66" style={{ display: 'block' }}>
      <rect width="70" height="66" rx="4" fill="#0d5fb3" />
      <rect x="6" y="6" width="25" height="54" rx="3" fill="#f4f6f9" />
      <rect x="38" y="6" width="26" height="30" fill="#6fd6ff" />
      <rect x="38" y="36" width="26" height="24" fill="#1a8ee8" />
    </svg>
  ),
  start: (
    <svg width="70" height="70" viewBox="0 0 70 70" style={{ display: 'block' }}>
      <rect width="34" height="34" rx="2" fill="#35b0ee" />
      <rect x="36" width="34" height="34" rx="2" fill="#1e96e6" />
      <rect y="36" width="34" height="34" rx="2" fill="#1284dc" />
      <rect x="36" y="36" width="34" height="34" rx="2" fill="#0a78d4" />
    </svg>
  ),
  copilot: (
    <Ic w={68} h={64}>
      <path d="M30 2C40 0 44 8 44 16L38 46C34 62 14 62 8 50 0 40 6 24 14 22 22 22 22 8 30 2Z" fill="url(#copA)" />
      <path d="M38 62C28 64 24 56 24 48L30 18C34 2 54 2 60 14 68 24 62 40 54 42 46 42 46 56 38 62Z" fill="url(#copB)" />
      <rect x="27" y="20" width="14" height="26" rx="7" fill="#e6edfa" transform="rotate(10 34 33)" />
    </Ic>
  ),
  edge: (
    <Ic w={74} h={72}>
      <path d="M36 1C56 1 72 16 72 34 72 46 58 50 46 48 54 42 54 32 46 26 38 18 18 16 4 30 8 12 20 1 36 1Z" fill="url(#edgeB)" />
      <path d="M4 30C18 14 40 18 46 30 36 26 24 30 24 42 24 54 38 68 58 62 50 68 42 71 34 71 16 71 1 54 4 30Z" fill="url(#edgeA)" />
      <path d="M24 42C26 54 40 62 58 58 64 54 68 50 70 46 60 54 44 54 36 46 32 42 30 36 34 30 28 30 24 36 24 42Z" fill="#134a94" />
    </Ic>
  ),
  folder: (
    <Ic w={72} h={66}>
      <path d="M0 8Q0 0 8 0H24L30 8V20H0Z" fill="#d6a014" />
      <rect y="8" width="72" height="56" rx="2" fill="#fbcd52" />
      <path d="M0 10H72V14H0Z" fill="#e8b52e" />
      <path d="M20 34H60Q64 34 64 38V64H16V38Q16 34 20 34Z" fill="#1488dc" />
      <rect x="30" y="46" width="24" height="3" fill="#0b4f8e" />
    </Ic>
  ),
  store: (
    <Ic w={70} h={72}>
      <path d="M16 14V4Q16 1 20 1H50Q54 1 54 4V14" fill="none" stroke="#3cc0ea" strokeWidth="4" />
      <rect y="10" width="70" height="62" rx="6" fill="#1a4a85" />
      <rect x="20" y="26" width="14" height="16" fill="#e8542a" />
      <rect x="36" y="26" width="14" height="16" fill="#7eb82a" />
      <rect x="20" y="44" width="14" height="14" fill="#2aa7e8" />
      <rect x="36" y="44" width="14" height="14" fill="#f8b81c" />
    </Ic>
  ),
  dell: (
    <Ic w={74} h={72}>
      <ellipse cx="37" cy="36" rx="35" ry="34" fill="none" stroke="#0a0a0a" strokeWidth="4" />
      <text x="37" y="44" textAnchor="middle" fontFamily="Liberation Sans, sans-serif" fontWeight="700" fontSize="22" fill="#111" letterSpacing="-1">DELL</text>
    </Ic>
  ),
  chrome: (
    <svg width="74" height="72" viewBox="0 0 74 72" style={{ display: 'block', overflow: 'visible' }}>
      <circle cx="37" cy="36" r="36" fill="#2a9a48" />
      <path d="M37 0A36 36 0 0 1 69 18H37A18 18 0 0 0 21 44L6 18A36 36 0 0 1 37 0Z" fill="#d93a2c" />
      <path d="M69 18A36 36 0 0 1 37 72L53 44A18 18 0 0 0 55 18Z" fill="#f7c21a" />
      <circle cx="37" cy="36" r="19" fill="#fff" />
      <circle cx="37" cy="36" r="15" fill="#2f74e6" />
      <g>
        <ellipse cx="62" cy="-2" rx="23" ry="25" fill="#a9a0c6" />
        <path d="M39 0H85Q85 24 62 24 39 24 39 0Z" fill="#7c6a52" />
        <path d="M40 -6H84V2H40Z" fill="#cfd3da" />
      </g>
    </svg>
  ),
  photos: (
    <Ic w={66} h={70}>
      <rect width="66" height="70" fill="#eef3f8" />
      <rect y="66" width="66" height="4" fill="#a3acbc" />
      <path d="M46 2C54 6 48 18 42 22 40 14 42 6 46 2ZM10 38C22 38 26 52 26 58 16 56 10 48 10 38Z" fill="#5aa84a" />
      <g fill="#f08a4a">
        <circle cx="16" cy="10" r="6" /><circle cx="7" cy="20" r="6" /><circle cx="25" cy="20" r="6" /><circle cx="10" cy="31" r="6" /><circle cx="22" cy="31" r="6" />
      </g>
      <circle cx="16" cy="21" r="4" fill="#d9561a" />
      <g fill="#fad03c">
        <ellipse cx="44" cy="22" rx="7" ry="9" /><ellipse cx="30" cy="34" rx="8" ry="7" /><ellipse cx="58" cy="34" rx="8" ry="7" /><ellipse cx="34" cy="50" rx="7" ry="8" /><ellipse cx="54" cy="50" rx="7" ry="8" /><ellipse cx="44" cy="58" rx="6" ry="8" />
      </g>
      <circle cx="44" cy="38" r="6" fill="#f0891c" />
    </Ic>
  ),
  qb: (
    <Ic w={72} h={72}>
      <ellipse cx="36" cy="36" rx="35" ry="35" fill="#2ca01c" />
      <path d="M32 60V22H22A12 12 0 0 0 22 46H26M40 12V50H50A12 12 0 0 0 50 26H46" fill="none" stroke="#fff" strokeWidth="5.5" />
    </Ic>
  ),
  ppt: (
    <Ic w={70} h={66}>
      <rect x="26" y="8" width="44" height="50" fill="#fff" stroke="#d24726" strokeWidth="3" />
      <path d="M0 9 38 0V66L0 58Z" fill="#d24726" />
      <text x="7" y="46" fontFamily="Liberation Sans, sans-serif" fontWeight="700" fontSize="34" fill="#fff">P</text>
      <circle cx="54" cy="24" r="10" fill="#d24726" />
      <path d="M54 24V13A11 11 0 0 1 65 24Z" fill="#fff" />
      <path d="M42 40H66M42 48H66" stroke="#d24726" strokeWidth="3.5" />
    </Ic>
  ),
  vscode: (
    <Ic w={72} h={72}>
      <path d="M51 1 71 11V61L51 71 20 42 8 52 1 47V25L8 20 20 30Z" fill="#0a7fcb" />
      <path d="M51 1 71 11V61L51 71Z" fill="#22a7f0" />
      <path d="M1 47 51 1V18L14 54ZM1 25 8 20 51 54V71Z" fill="#0c6fb5" opacity=".85" />
    </Ic>
  ),
  sw: (
    <svg width="74" height="68" viewBox="0 0 74 68" style={{ display: 'block', overflow: 'visible' }}>
      <path d="M34 -2 66 16 64 50 34 68 2 50 1 16Z" fill="#e52c2c" stroke="#3a0505" strokeWidth="1" />
      <path d="M34 24 66 16 64 50 34 68Z" fill="#7c0f0f" />
      <path d="M34 -2 66 16 34 24 1 16Z" fill="#ef3a3a" />
      <text x="6" y="54" fontFamily="Liberation Sans, sans-serif" fontWeight="700" fontSize="32" fill="#fff">S</text>
      <text x="36" y="48" fontFamily="Liberation Sans, sans-serif" fontWeight="700" fontSize="28" fill="#fff" textLength="26" lengthAdjust="spacingAndGlyphs">W</text>
      <text x="30" y="68" fontFamily="Liberation Sans, sans-serif" fontWeight="700" fontSize="17" fill="#f4f4f4" stroke="#222" strokeWidth="3" paintOrder="stroke">2023</text>
    </svg>
  ),
};

const DockFloatIcon = () => (
  <svg width="22" height="22" viewBox="0 0 22 22">
    <rect x="8" y="1" width="12" height="13" fill="none" stroke="#666" strokeWidth="3" />
    <rect x="2" y="8" width="10" height="13" fill="#f0f0f0" stroke="#666" strokeWidth="3" />
  </svg>
);

const DockSplitIcon = () => (
  <svg width="22" height="24" viewBox="0 0 22 24">
    <rect x="1.5" y="1.5" width="19" height="21" fill="none" stroke="#666" strokeWidth="3" />
    <path d="M1 8H21" stroke="#666" strokeWidth="3" />
  </svg>
);

const Check: React.FC<{ top: number; left?: number; checked?: boolean; children: React.ReactNode }> = ({
  top,
  left,
  checked,
  children,
}) => (
  <CheckRow $top={top} $left={left}>
    <CheckBox>{checked && <Tick />}</CheckBox>
    {children}
  </CheckRow>
);

const SpinField: React.FC<{ w: number; pad: number; value: string }> = ({ w, pad, value }) => (
  <Spin $w={w}>
    <SpinValue $pad={pad}>
      {value}
      <ExprBadge>
        <ExprIcon />
      </ExprBadge>
    </SpinValue>
    <SpinButtons>
      <SpinButton>
        <SpinUp />
      </SpinButton>
      <SpinButton $down>
        <SpinDown />
      </SpinButton>
    </SpinButtons>
  </Spin>
);

const ToolRow: React.FC<{ names: string[] }> = ({ names }) => (
  <>
    {names.map((n) => (
      <Tool key={n}>{icons[n]}</Tool>
    ))}
  </>
);

const Arrow = () => (
  <MenuArrow>
    <Drop />
  </MenuArrow>
);

const App: React.FC = () => {
  return (
    <Screen>
      <GlobalStyle />
      <GrayDefs />
      <TitleBar>
        <svg width="34" height="50" viewBox="4 0 34 50" style={{ display: 'block', flex: 'none' }}>
          <path d="M0 6 6 0H36V14H14V42L6 50H0Z" fill="#d9434a" />
          <path d="M6 9H30V18H17V26H22V34H14V44H6Z" fill="#ffffff" />
          <path d="M30 12H36L38 26 30 32 32 38 22 42 18 50H8L14 40V34H22V26H30Z" fill="#3c8fe6" />
        </svg>
        <TitleText>* Unnamed - FreeCAD 1.0.0</TitleText>
        <WindowControls>
          <svg width="24" height="4" viewBox="0 0 24 4">
            <path d="M0 2H24" stroke="#222" strokeWidth="2.5" />
          </svg>
          <svg width="20" height="20" viewBox="0 0 20 20">
            <rect x="1.5" y="5" width="13" height="13.5" rx="3" fill="none" stroke="#111" strokeWidth="2.5" />
            <path d="M5 2H15Q18.5 2 18.5 6V14" fill="none" stroke="#111" strokeWidth="2.5" />
          </svg>
          <svg width="22" height="22" viewBox="0 0 22 22">
            <path d="M1 1 21 21M21 1 1 21" stroke="#111" strokeWidth="2.2" />
          </svg>
        </WindowControls>
      </TitleBar>
      <MenuBar>
        <span><u>F</u>ile</span>
        <span><u>E</u>dit</span>
        <span><u>V</u>iew</span>
        <span><u>T</u>ools</span>
        <span><u>M</u>acro</span>
        <span><u>S</u>ketch</span>
        <span><u>P</u>art Design</span>
        <span><u>W</u>indows</span>
        <span><u>H</u>elp</span>
      </MenuBar>

      <Toolbar>
        <Grip $ml={1} />
        <ToolRow names={['newDoc', 'open', 'save']} />
        <Grip $ml={22} />
        <ToolRow names={['undo', 'redo']} />
        <Sep />
        <ToolRow names={['refresh']} />
        <Grip $ml={25} />
        <WorkbenchCombo>
          <PartDesignIcon />
          Part Design
          <ComboDrop>
            <SmallDrop />
          </ComboDrop>
        </WorkbenchCombo>
        <Grip $ml={24} />
        <ToolRow names={['zoomAll', 'zoomSel', 'views']} />
        <Arrow />
        <ToolRow names={['bbox']} />
        <Sep />
        <ToolRow names={['noDraw']} />
        <Arrow />
        <ToolRow names={['cubeCursor']} />
        <Arrow />
        <ToolRow names={['zoomRefresh']} />
        <Arrow />
        <ToolRow names={['measure']} />
      </Toolbar>

      <Toolbar>
        <Grip $ml={1} />
        <ToolRow names={['lBlockLight', 'folder', 'exportDoc']} />
        <Arrow />
        <ToolRow names={['braces']} />
        <Grip $ml={24} />
        <ToolRow names={['whatsThis']} />
        <Grip $ml={23} />
        <ToolRow names={['lBlockDark', 'sketch']} />
        <Arrow />
        <ToolRow names={['sketchOk', 'pawn', 'surface', 'sheep', 'poly']} />
        <Arrow />
      </Toolbar>

      <Toolbar>
        <Grip $ml={1} />
        <ToolRow names={['pad']} />
        <Tool>{revolve('gl')}</Tool>
        <Tool>{loft('gl')}</Tool>
        <Tool>{pipe('gl')}</Tool>
        <Tool>{helix('gl')}</Tool>
        <Tool>{prim('gl')}</Tool>
        <Arrow />
        <Sep />
        <ToolRow names={['pocket', 'hole']} />
        <Tool>{revolve('gm')}</Tool>
        <Tool>{loft('gd')}</Tool>
        <Tool>{pipe('gd')}</Tool>
        <Tool>{helix('gd')}</Tool>
        <Tool>{prim('gd')}</Tool>
        <Arrow />
        <Sep />
        <ToolRow names={['sphere']} />
        <Grip $ml={24} />
        <ToolRow names={['fillet', 'chamfer', 'draft', 'thickness']} />
        <Grip $ml={24} />
        <ToolRow names={['mirrored', 'linear', 'polar', 'multi']} />
      </Toolbar>

      <Main>
        <TaskPanel>
          <DockHeader>
            <DockTitle>Tasks</DockTitle>
            <DockIcons>
              <DockSplitIcon />
              <DockFloatIcon />
            </DockIcons>
          </DockHeader>
          <ButtonRow>
            <PushButton>OK</PushButton>
            <PushButton>Cancel</PushButton>
          </ButtonRow>
          <TaskBox>
            <TaskBoxHeader>
              <PadIcon />
              Pad parameters
              <CollapseButton>
                <svg width="50" height="52" viewBox="0 0 50 52">
                  <ellipse cx="25" cy="26" rx="22" ry="23" fill="none" stroke="#aab4bf" strokeWidth="4" />
                  <path d="M14 25 25 14 36 25M14 38 25 27 36 38" fill="none" stroke="#7f8a96" strokeWidth="4" />
                </svg>
              </CollapseButton>
            </TaskBoxHeader>
            <TaskBody>
              <FormRow $h={74}>
                Type
                <Combo $w={412}>
                  Dimension
                  <SmallDrop />
                </Combo>
              </FormRow>
              <FormRow $top={20}>
                Length
                <SpinField w={412} pad={30} value="10.00 mm" />
              </FormRow>
              <Check top={25}>Symmetric to plane</Check>
              <Check top={29}>Reversed</Check>
              <GroupBox>
                <GroupLegend>Direction</GroupLegend>
                <FormRow $h={74}>
                  <GroupLabel>Direction/edge:</GroupLabel>
                  <Combo $w={341}>
                    Sketch normal
                    <SmallDrop />
                  </Combo>
                </FormRow>
                <Check top={25} left={39}>Show direction</Check>
                <Check top={30} left={39} checked>Length along sketch normal</Check>
              </GroupBox>
              <FormRow $top={18}>
                Taper angle
                <SpinField w={377} pad={30} value="0.00 °" />
              </FormRow>
              <Rule />
              <Check top={24} checked>Update view</Check>
            </TaskBody>
          </TaskBox>
        </TaskPanel>
        <RightColumn>
          <Viewport>
            <ModelShape />
            <VertexDot />
            <NavigationCube />
            <AxisTriad />
          </Viewport>
          <TabBar>
            <Tab>
              <FreeCadLogo w={38} h={48} />
              Start
              <TabClose>
                <CloseX />
              </TabClose>
            </Tab>
            <Tab $active>
              <svg width="34" height="48" viewBox="0 0 34 48" style={{ flex: 'none' }}>
                <path d="M1 1H24L33 10V47H1Z" fill="#fff" stroke="#333" strokeWidth="2" />
                <path d="M6 26 17 18 28 26V38L17 45 6 38Z" fill="#3f7fc4" stroke="#173e6d" strokeWidth="1.5" />
                <ellipse cx="21" cy="20" rx="7" ry="10" fill="#d9241e" />
              </svg>
              Unnamed : 1*
              <TabClose>
                <CloseX />
              </TabClose>
            </Tab>
          </TabBar>
        </RightColumn>
      </Main>

      <StatusBar>
        <StatusText>Preselected: Unnamed.Body.Sketch.Vertex10 (12.79 mm, -0.61 mm, 0.00 mm)</StatusText>
        <StatusCombos>
          <StatusCombo $w={268} $h={77} $pad={3}>
            <svg width="42" height="40" viewBox="0 0 42 40" style={{ flex: 'none' }}>
              <rect x="1" y="1" width="40" height="38" fill="#3e6fae" stroke="#183a66" strokeWidth="2" />
              <path d="M2 2 21 26 40 2M2 38 21 26 40 38" fill="none" stroke="#7ea4d4" strokeWidth="1.5" />
            </svg>
            <span>16</span>
            <StatusArrow />
          </StatusCombo>
          <StatusCombo $w={268} $h={77} $pad={72}>
            <svg width="28" height="42" viewBox="0 0 28 42" style={{ flex: 'none' }}>
              <rect x="2.5" y="2.5" width="23" height="37" rx="11" fill="none" stroke="#333" strokeWidth="4" />
              <path d="M14 9V16" stroke="#333" strokeWidth="3" />
            </svg>
            <span>CAD</span>
            <StatusArrow />
          </StatusCombo>
          <StatusCombo $w={394} $h={68} $pad={12}>
            265.00 mm x 122.14 mm
            <StatusArrow $top={22} $right={2} />
          </StatusCombo>
        </StatusCombos>
      </StatusBar>

      <Taskbar>
        <WidgetButton>{task.widgets}</WidgetButton>
        <StartButton>{task.start}</StartButton>
        <SearchBox>
          <svg width="44" height="46" viewBox="0 0 44 46" style={{ flex: 'none' }}>
            <ellipse cx="20" cy="19" rx="16" ry="17" fill="none" stroke="#222" strokeWidth="5" />
            <path d="M30 31 42 44" stroke="#222" strokeWidth="6" />
          </svg>
          Search
        </SearchBox>
        <TaskSlots>
          <TaskSlot>{task.copilot}</TaskSlot>
          <TaskSlot>{task.edge}</TaskSlot>
          <TaskSlot>{task.folder}<RunDot /></TaskSlot>
          <TaskSlot>{task.store}</TaskSlot>
          <TaskSlot>{task.dell}</TaskSlot>
          <TaskSlot>{task.chrome}<RunDot /></TaskSlot>
          <TaskSlot>{task.photos}</TaskSlot>
          <TaskSlot>{task.qb}</TaskSlot>
          <TaskSlot>{task.ppt}<RunDot /></TaskSlot>
          <TaskSlot>{task.vscode}<RunDot /></TaskSlot>
          <TaskSlot>{task.sw}<RunDot /></TaskSlot>
          <TaskSlot $current>
            <CurrentFrame>
              <FreeCadLogo w={14} h={18} />
            </CurrentFrame>
            <RunDot $current />
          </TaskSlot>
        </TaskSlots>
        <Clock>
          <div>7:12 PM</div>
          <div>2/4/2025</div>
        </Clock>
      </Taskbar>
    </Screen>
  );
};

export default App;
